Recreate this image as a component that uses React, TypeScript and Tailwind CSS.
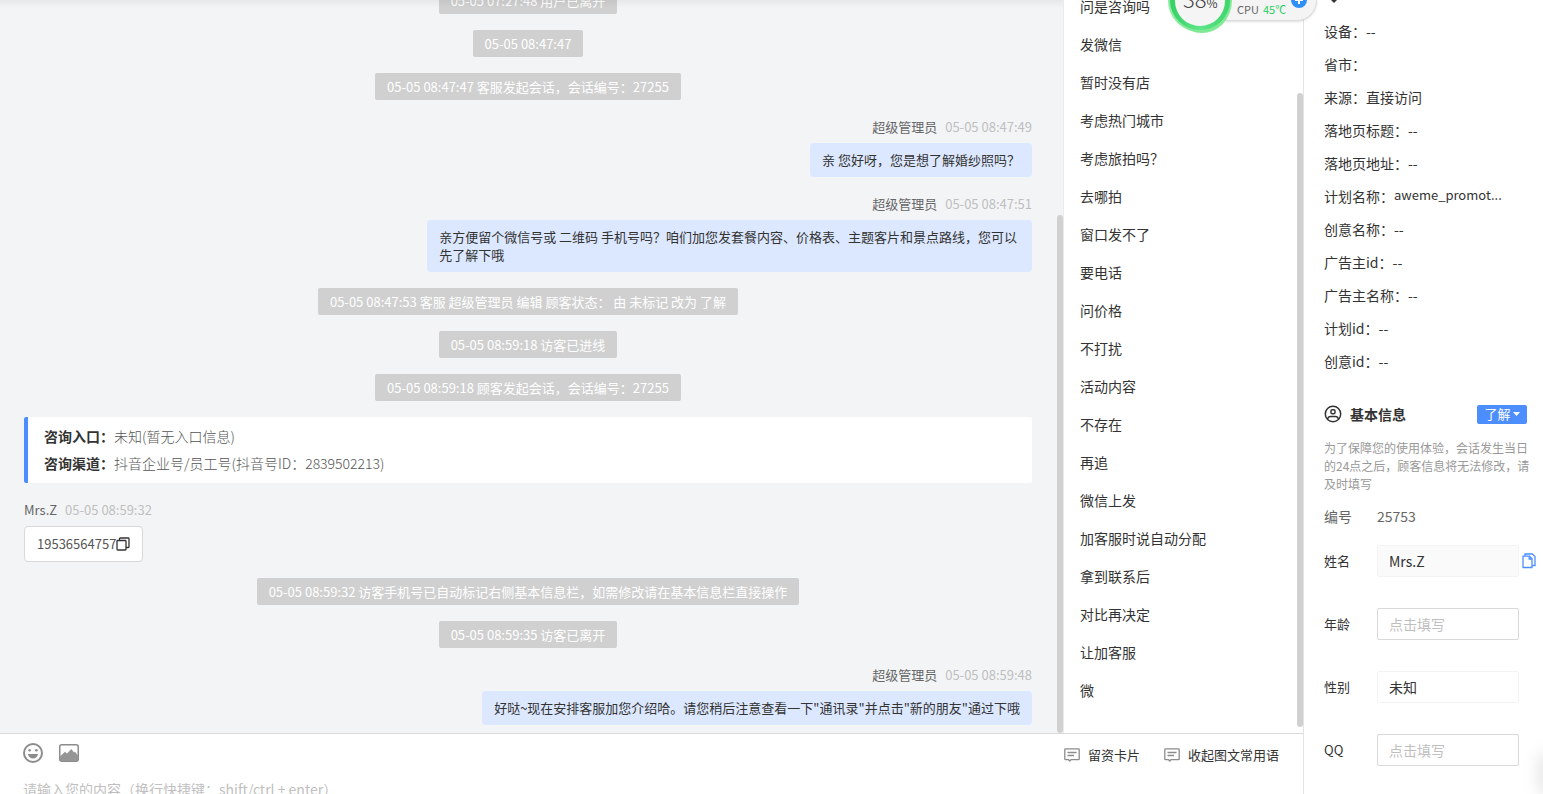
import React from 'react';

type ChatItem =
  | { kind: 'notice'; text: string }
  | { kind: 'agent'; name: string; time: string; text: string }
  | { kind: 'visitor'; name: string; time: string; phone: string }
  | { kind: 'entry'; rows: { label: string; value: string }[] };

const chat: ChatItem[] = [
  { kind: 'notice', text: '05-05 07:27:48 用户已离开' },
  { kind: 'notice', text: '05-05 08:47:47' },
  { kind: 'notice', text: '05-05 08:47:47 客服发起会话，会话编号：27255' },
  { kind: 'agent', name: '超级管理员', time: '05-05 08:47:49', text: '亲 您好呀，您是想了解婚纱照吗？' },
  {
    kind: 'agent',
    name: '超级管理员',
    time: '05-05 08:47:51',
    text: '亲方便留个微信号或 二维码 手机号吗？咱们加您发套餐内容、价格表、主题客片和景点路线，您可以先了解下哦',
  },
  { kind: 'notice', text: '05-05 08:47:53 客服 超级管理员 编辑 顾客状态： 由 未标记 改为 了解' },
  { kind: 'notice', text: '05-05 08:59:18 访客已进线' },
  { kind: 'notice', text: '05-05 08:59:18 顾客发起会话，会话编号：27255' },
  {
    kind: 'entry',
    rows: [
      { label: '咨询入口：', value: '未知(暂无入口信息)' },
      { label: '咨询渠道：', value: '抖音企业号/员工号(抖音号ID：2839502213)' },
    ],
  },
  { kind: 'visitor', name: 'Mrs.Z', time: '05-05 08:59:32', phone: '19536564757' },
  { kind: 'notice', text: '05-05 08:59:32 访客手机号已自动标记右侧基本信息栏，如需修改请在基本信息栏直接操作' },
  { kind: 'notice', text: '05-05 08:59:35 访客已离开' },
  {
    kind: 'agent',
    name: '超级管理员',
    time: '05-05 08:59:48',
    text: '好哒~现在安排客服加您介绍哈。请您稍后注意查看一下"通讯录"并点击"新的朋友"通过下哦',
  },
];

const phrases = [
  '问是咨询吗', '发微信', '暂时没有店', '考虑热门城市', '考虑旅拍吗？', '去哪拍', '窗口发不了',
  '要电话', '问价格', '不打扰', '活动内容', '不存在', '再追', '微信上发', '加客服时说自动分配',
  '拿到联系后', '对比再决定', '让加客服', '微',
];

const visitInfo = [
  ['设备', '--'],
  ['省市', ''],
  ['来源', '直接访问'],
  ['落地页标题', '--'],
  ['落地页地址', '--'],
  ['计划名称', 'aweme_promot...'],
  ['创意名称', '--'],
  ['广告主id', '--'],
  ['广告主名称', '--'],
  ['计划id', '--'],
  ['创意id', '--'],
];

const CopyIcon = () => (
  <svg width="14" height="14" viewBox="0 0 14 14" fill="none" stroke="#333" strokeWidth="1.3">
    <rect x="1" y="3.5" width="9" height="9.5" rx="0.8" />
    <path d="M3.5 3.5V1.8c0-.5.3-.8.8-.8h8c.4 0 .7.3.7.8v7.900c0 .5-.3.8-.7.8H10" />
  </svg>
);

const CopyPagesIcon = () => (
  <svg width="14" height="16" viewBox="0 0 14 16" fill="none" stroke="#4d8eff" strokeWidth="1.3">
    <path d="M1 3.2h6.4L10 5.8v8.7H1z" />
    <path d="M7.2 3.2V6H10" />
    <path d="M3 3V1h7.2L13 3.6v8.9h-2.8" />
  </svg>
);

const SmileIcon = () => (
  <svg width="20" height="20" viewBox="0 0 20 20" fill="none">
    <circle cx="10" cy="10" r="9" stroke="#8c8c8c" strokeWidth="2" />
    <circle cx="6.6" cy="7.2" r="1.3" fill="#8c8c8c" />
    <circle cx="13.4" cy="7.2" r="1.3" fill="#8c8c8c" />
    <path d="M5 11h10c-.4 2.8-2.4 4.5-5 4.5S5.4 13.8 5 11z" fill="#8c8c8c" />
  </svg>
);

const ImageIcon = () => (
  <svg width="20" height="18" viewBox="0 0 20 18">
    <rect x="0.75" y="0.75" width="18.5" height="16.5" rx="2" fill="#fff" stroke="#8c8c8c" strokeWidth="1.5" />
    <path d="M1 12.500L6 7.800l2 1.700L12.400 5l2.600 3.500 1-.8 3 3.800V17H1z" fill="#969696" />
  </svg>
);

const CardIcon = () => (
  <svg width="16" height="14" viewBox="0 0 16 14" fill="none" stroke="#8c8c8c" strokeWidth="1.3">
    <path d="M1.5.8h13c.4 0 .7.3.7.7v9.500c0 .4-.3.7-.7.7H7L5.800 13l-1.200-1.300H1.500c-.4 0-.7-.3-.7-.7V1.500c0-.4.3-.7.7-.7z" />
    <path d="M3.500 4.500h9M3.500 7.500h6.500" />
  </svg>
);

const UserIcon = () => (
  <svg width="18" height="18" viewBox="0 0 18 18" fill="none" stroke="#333" strokeWidth="1.5">
    <circle cx="9" cy="9" r="7.7" />
    <rect x="7" y="4.700" width="4" height="4" rx="1.300" />
    <path d="M3.500 14c.5-1.700 1.500-2.500 3-2.500h5c1.500 0 2.500.8 3 2.500" />
  </svg>
);

const Meta = ({ name, time }: { name: string; time: string }) => (
  <div className="mb-[5px] flex h-[22px] items-center gap-2">
    <span className="text-[#666]">{name}</span>
    <span className="text-[#bfbfbf]">{time}</span>
  </div>
);

const ChatRow = ({ item }: { item: ChatItem }) => {
  if (item.kind === 'notice') {
    return (
      <div className="flex h-[27px] shrink-0 items-center self-center rounded-xs bg-[#d0d0d0] px-3 whitespace-nowrap text-white">
        {item.text}
      </div>
    );
  }
  if (item.kind === 'entry') {
    return (
      <dl className="shrink-0 rounded-xs border-l-4 border-[#4d8eff] bg-white px-4 py-1.5 text-sm leading-[27px]">
        {item.rows.map((row) => (
          <div key={row.label} className="flex">
            <dt className="font-bold text-[#333]">{row.label}</dt>
            <dd className="font-light text-[#555]">{row.value}</dd>
          </div>
        ))}
      </dl>
    );
  }
  if (item.kind === 'visitor') {
    return (
      <div className="flex shrink-0 flex-col items-start">
        <Meta name={item.name} time={item.time} />
        <div className="flex h-9 items-center rounded border border-[#d9d9d9] bg-white px-3 text-[#555]">
          {item.phone}
          <button type="button" aria-label="复制手机号">
            <CopyIcon />
          </button>
        </div>
      </div>
    );
  }
  return (
    <div className="flex shrink-0 flex-col items-end">
      <Meta name={item.name} time={item.time} />
      <p className="max-w-3/5 rounded bg-[#dce8ff] px-3 py-2 leading-[18px] text-[#333]">{item.text}</p>
    </div>
  );
};

const ChatPanel = () => (
  <main className="relative flex min-w-0 flex-1 flex-col justify-end gap-4 overflow-hidden bg-[#f3f4f6] pr-[31px] pb-2 pl-6">
    {chat.map((item, i) => (
      <ChatRow key={i} item={item} />
    ))}
    <div className="absolute inset-x-0 top-0 h-2 bg-gradient-to-b from-black/5 to-transparent" />
    <div className="absolute right-0 bottom-0 h-[518px] w-1.5 rounded-full bg-[#d0d0d0]" />
  </main>
);

const PhrasePanel = () => (
  <nav className="relative flex w-60 shrink-0 flex-col justify-end overflow-hidden border-l border-[#ebebeb] bg-white pb-6 pl-4">
    <ul className="text-sm">
      {phrases.map((p) => (
        <li key={p}>
          <button type="button" className="flex h-[38px] w-full items-center text-left">
            {p}
          </button>
        </li>
      ))}
    </ul>
    <div className="absolute right-0 bottom-1.5 h-[634px] w-1.5 rounded-full bg-[#d0d0d0]" />
  </nav>
);

const Composer = () => (
  <footer className="h-[61px] shrink-0 overflow-hidden border-t border-[#d9d9d9] bg-white pr-6 pl-[23px]">
    <div className="flex h-[38px] items-center gap-4">
      <button type="button" aria-label="表情">
        <SmileIcon />
      </button>
      <button type="button" aria-label="图片">
        <ImageIcon />
      </button>
      <div className="ml-auto flex gap-6 pt-1">
        <button type="button" className="flex items-center gap-2">
          <CardIcon />
          留资卡片
        </button>
        <button type="button" className="flex items-center gap-2">
          <CardIcon />
          收起图文常用语
        </button>
      </div>
    </div>
    <textarea
      aria-label="消息内容"
      placeholder="请输入您的内容（换行快捷键：shift/ctrl + enter）"
      className="mt-1.5 block h-16 w-full resize-none text-sm leading-[22px] outline-none placeholder:text-[#bfbfbf]"
    />
  </footer>
);

const fieldBox = 'h-8 w-[142px] shrink-0 appearance-none rounded-xs border px-[11px] text-sm outline-none placeholder:text-[#bfbfbf]';

const Field = ({ id, label, children }: { id: string; label: string; children: React.ReactNode }) => (
  <div className="flex items-center">
    <label htmlFor={id} className="w-[53px] shrink-0">
      {label}
    </label>
    {children}
  </div>
);

const InfoPanel = () => (
  <aside className="relative w-60 shrink-0 overflow-hidden border-l border-[#e3e3e3] bg-white pr-3 pl-5">
    <div className="h-3.5 overflow-hidden pl-1.5">
      <svg width="8" height="4" viewBox="0 0 8 4">
        <path d="M1 0h6L4 3z" fill="#333" />
      </svg>
    </div>
    <dl className="text-sm">
      {visitInfo.map(([label, value]) => (
        <div key={label} className="flex h-[33px] items-center whitespace-nowrap">
          <dt>{label}：</dt>
          <dd className={/^\w/.test(value) ? 'text-[13px]' : ''}>{value}</dd>
        </div>
      ))}
    </dl>

    <div className="mt-[26px] flex h-[22px] items-center gap-2">
      <UserIcon />
      <h2 className="text-sm font-bold">基本信息</h2>
      <button
        type="button"
        className="mr-1 ml-auto flex h-[19px] w-[50px] items-center justify-center gap-0.5 rounded-xs bg-[#4d8eff] text-white"
      >
        了解
        <svg width="7" height="4" viewBox="0 0 7 4">
          <path d="M0 0h7L3.500 4z" fill="#fff" />
        </svg>
      </button>
    </div>
    <p className="mt-3.5 text-xs leading-[18px] text-[#999]">
      为了保障您的使用体验，会话发生当日的24点之后，顾客信息将无法修改，请及时填写
    </p>

    <div className="mt-3 flex h-[22px] items-center text-sm text-[#666]">
      <span className="w-[53px]">编号</span>
      <span>25753</span>
    </div>
    <div className="mt-[18px] flex flex-col gap-[31px]">
      <Field id="name" label="姓名">
        <input id="name" readOnly defaultValue="Mrs.Z" className={`${fieldBox} border-[#f3f3f3] bg-[#fafafa]`} />
        <button type="button" aria-label="复制姓名" className="ml-[3px] shrink-0">
          <CopyPagesIcon />
        </button>
      </Field>
      <Field id="age" label="年龄">
        <input id="age" placeholder="点击填写" className={`${fieldBox} border-[#d9d9d9]`} />
      </Field>
      <Field id="gender" label="性别">
        <select id="gender" className={`${fieldBox} border-[#f3f3f3]`}>
          <option>未知</option>
        </select>
      </Field>
      <Field id="qq" label="QQ">
        <input id="qq" placeholder="点击填写" className={`${fieldBox} border-[#d9d9d9]`} />
      </Field>
    </div>
    <div className="absolute -right-1 bottom-0 h-10 w-1 shadow-[0_0_16px_rgba(0,0,0,0.35)]" />
  </aside>
);

// Floating hardware monitor, mostly tucked above the top edge
const MonitorWidget = () => (
  <div className="absolute top-0 right-[224px] h-9 w-[152px] overflow-hidden">
    <div className="absolute -top-5 left-8 h-[41px] w-[118px] rounded-full border border-[#ddd] bg-[#f4f4f4] shadow" />
    <svg className="absolute top-0 left-0" width="152" height="36" viewBox="0 0 152 36">
      <defs>
        <linearGradient id="ring" x1="0" y1="0" x2="1" y2="0">
          <stop offset="0" stopColor="#35cf63" />
          <stop offset="0.5" stopColor="#5fe58a" />
          <stop offset="1" stopColor="#3ed66b" />
        </linearGradient>
      </defs>
      <ellipse cx="33" cy="1" rx="32" ry="31" fill="#8cec9f" />
      <ellipse cx="35" cy="3" rx="29" ry="30" fill="#7fe993" />
      <circle cx="33" cy="0" r="30" fill="url(#ring)" />
      <circle cx="33" cy="1" r="25" fill="#f5f5f5" />
      <circle cx="132" cy="0" r="8" fill="#2f8ff5" />
      <path d="M128 0h8M132 -4v8" stroke="#fff" strokeWidth="2" />
    </svg>
    <div className="absolute -top-3.5 left-4 flex items-baseline leading-6 text-[#444]">
      <span className="text-[22px] font-light">38</span>
      <span className="text-xs">%</span>
    </div>
    <div className="absolute top-px left-[70px] flex gap-1 text-[11px] leading-4 text-[#666]">
      <span>CPU</span>
      <span className="text-[#1fcf5c]">45℃</span>
    </div>
  </div>
);

export default function App() {
  return (
    <div className="relative flex h-screen overflow-hidden bg-white font-['Noto_Sans_CJK_SC',sans-serif] text-[13px] text-[#333]">
      <div className="flex min-w-0 flex-1 flex-col">
        <div className="flex min-h-0 flex-1">
          <ChatPanel />
          <PhrasePanel />
        </div>
        <Composer />
      </div>
      <InfoPanel />
      <MonitorWidget />
    </div>
  );
}
